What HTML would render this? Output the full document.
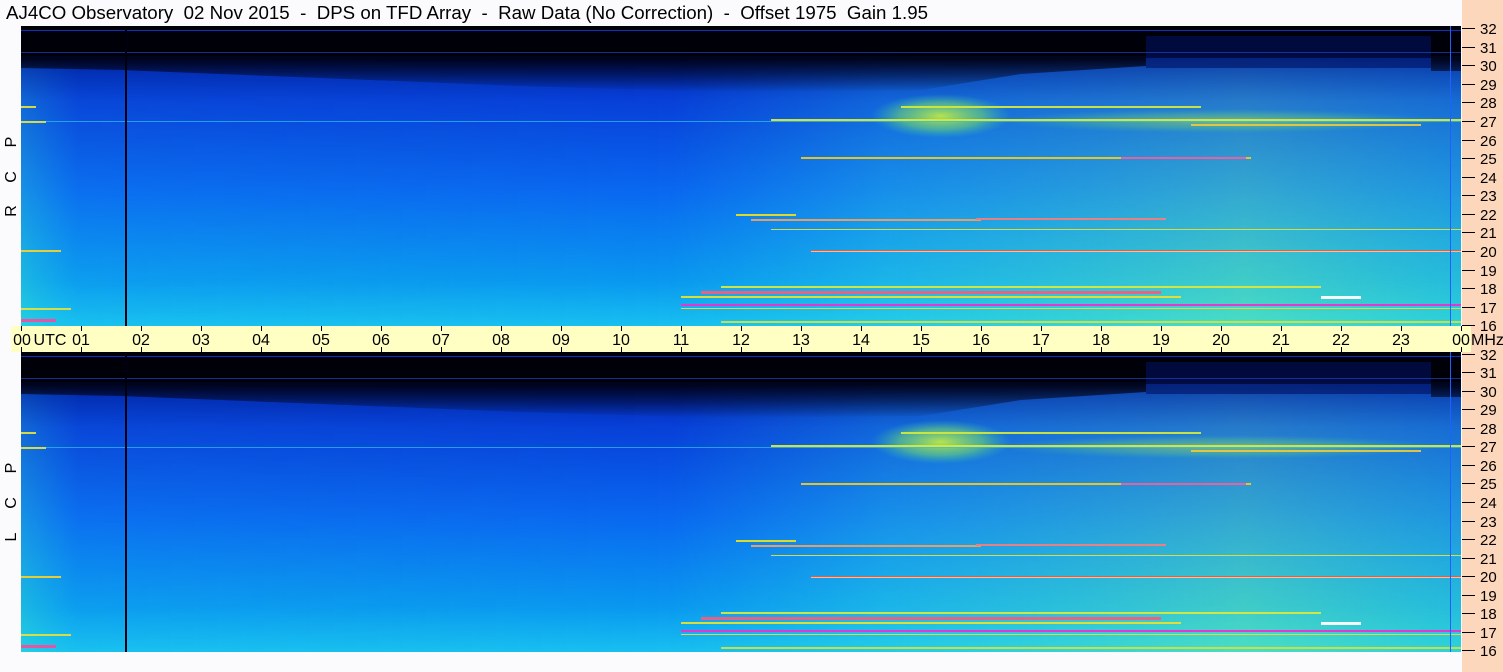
<!DOCTYPE html>
<html><head><meta charset="utf-8"><style>
html,body{margin:0;padding:0;width:1503px;height:672px;overflow:hidden;background:#fbfbfd;font-family:"Liberation Sans",sans-serif}
svg text{font-family:"Liberation Sans",sans-serif;white-space:pre}
</style></head><body>
<svg width="1503" height="672" xmlns="http://www.w3.org/2000/svg">
<defs>
<linearGradient id="vg" x1="0" y1="0" x2="0" y2="1">
<stop offset="0" stop-color="#001050"/><stop offset="0.1" stop-color="#0020a0"/><stop offset="0.25" stop-color="#0840d8"/><stop offset="0.55" stop-color="#0a68f0"/><stop offset="0.85" stop-color="#0a98f0"/><stop offset="1" stop-color="#18c0f0"/>
</linearGradient>
<linearGradient id="hg" x1="0" y1="0" x2="1" y2="0">
<stop offset="0" stop-color="#30e0d0" stop-opacity="0.5"/><stop offset="0.04" stop-color="#20d0e8" stop-opacity="0.1"/><stop offset="0.45" stop-color="#20d0e0" stop-opacity="0"/><stop offset="0.6" stop-color="#30d8e0" stop-opacity="0.5"/><stop offset="0.85" stop-color="#60eab0" stop-opacity="0.7"/><stop offset="1" stop-color="#40e0c8" stop-opacity="0.55"/>
</linearGradient>
<linearGradient id="fade" x1="0" y1="0" x2="0" y2="1">
<stop offset="0" stop-color="#fff" stop-opacity="0"/><stop offset="0.25" stop-color="#fff" stop-opacity="0.5"/><stop offset="1" stop-color="#fff" stop-opacity="1"/>
</linearGradient>
<mask id="m"><rect x="0" y="0" width="1440" height="300" fill="url(#fade)"/></mask>
<linearGradient id="tg" x1="0" y1="0" x2="0" y2="1">
<stop offset="0" stop-color="#000010" stop-opacity="1"/><stop offset="0.5" stop-color="#000010" stop-opacity="0.9"/><stop offset="1" stop-color="#000010" stop-opacity="0"/>
</linearGradient>
<radialGradient id="blob"><stop offset="0" stop-color="#c8f040" stop-opacity="0.9"/><stop offset="0.6" stop-color="#80e860" stop-opacity="0.5"/><stop offset="1" stop-color="#40d0a0" stop-opacity="0"/></radialGradient>
<g id="panel">
<rect x="0" y="0" width="1440" height="300" fill="url(#vg)"/>
<rect x="0" y="0" width="1440" height="300" fill="url(#hg)" mask="url(#m)"/>
<path d="M0 0H1440V45H1410V32H1125V40L1000 48L900 64L700 66L500 60L300 52L100 44L0 42Z" fill="url(#tg)"/>
<rect x="0" y="0" width="1440" height="30" fill="#000008"/>
<rect x="1125" y="10" width="285" height="32" fill="#001060" opacity="0.6"/>
<rect x="0" y="4" width="1440" height="1" fill="#1030c0"/>
<rect x="0" y="26" width="1440" height="1" fill="#2040d0" opacity="0.7"/>
<ellipse cx="920" cy="90" rx="70" ry="22" fill="url(#blob)"/>
<ellipse cx="1200" cy="95" rx="220" ry="12" fill="url(#blob)" opacity="0.5"/>
<rect x="0" y="95" width="1440" height="1" fill="#30c0f0" opacity="0.7"/>
<g opacity="0.95">
<rect x="750" y="93" width="690" height="2" fill="#e0e830"/>
<rect x="880" y="80" width="300" height="2" fill="#d0e840"/>
<rect x="1170" y="98" width="230" height="2" fill="#e8c840"/>
<rect x="780" y="131" width="450" height="2" fill="#f0c820"/>
<rect x="1100" y="131" width="125" height="2" fill="#f060a0"/>
<rect x="730" y="193" width="230" height="2" fill="#f0a060"/>
<rect x="715" y="188" width="60" height="2" fill="#e8e020"/>
<rect x="955" y="192" width="190" height="2" fill="#f08080"/>
<rect x="750" y="203" width="690" height="1" fill="#e0e040"/>
<rect x="790" y="224" width="650" height="2" fill="#f040c0"/>
<rect x="790" y="225" width="650" height="1" fill="#f0e020"/>
<rect x="0" y="224" width="40" height="2" fill="#f0d030"/>
<rect x="680" y="265" width="460" height="3" fill="#f06080"/>
<rect x="660" y="270" width="500" height="2" fill="#e8e030"/>
<rect x="700" y="260" width="600" height="2" fill="#d8e840"/>
<rect x="660" y="278" width="780" height="2" fill="#f030d0"/>
<rect x="660" y="282" width="780" height="1" fill="#e0e040"/>
<rect x="700" y="295" width="740" height="2" fill="#d0e040"/>
<rect x="0" y="282" width="50" height="2" fill="#e0e040"/>
<rect x="0" y="95" width="25" height="2" fill="#e0e040"/>
<rect x="0" y="80" width="15" height="2" fill="#e0e040"/>
<rect x="1300" y="270" width="40" height="3" fill="#ffffff"/>
<rect x="0" y="293" width="35" height="3" fill="#f050a0"/>
</g>
<rect x="104" y="0" width="2" height="300" fill="#000010"/>
<rect x="1429" y="0" width="1" height="300" fill="#2060ff"/>
</g>
</defs>
<text x="6" y="19" font-size="18" fill="#000" textLength="922" lengthAdjust="spacingAndGlyphs">AJ4CO Observatory  02 Nov 2015  -  DPS on TFD Array  -  Raw Data (No Correction)  -  Offset 1975  Gain 1.95</text>
<rect x="1462" y="0" width="41" height="672" fill="#fdd7bb"/>
<use href="#panel" x="21" y="26"/>
<use href="#panel" x="21" y="352"/>
<rect x="11" y="326" width="1460" height="26" fill="#ffffc4"/>
<g font-size="16" fill="#000" text-anchor="middle">
<text x="22" y="345">00</text><text x="50" y="345">UTC</text><text x="81" y="345">01</text>
<text x="141" y="345">02</text><text x="201" y="345">03</text><text x="261" y="345">04</text><text x="321" y="345">05</text><text x="381" y="345">06</text><text x="441" y="345">07</text><text x="501" y="345">08</text><text x="561" y="345">09</text><text x="621" y="345">10</text><text x="681" y="345">11</text><text x="741" y="345">12</text><text x="801" y="345">13</text><text x="861" y="345">14</text><text x="921" y="345">15</text><text x="981" y="345">16</text><text x="1041" y="345">17</text><text x="1101" y="345">18</text><text x="1161" y="345">19</text><text x="1221" y="345">20</text><text x="1281" y="345">21</text><text x="1341" y="345">22</text><text x="1401" y="345">23</text><text x="1461" y="345">00</text>
</g>
<text x="1471" y="345" font-size="16" fill="#000">MHz</text>
<g stroke="#000" stroke-width="1">
<path d="M21.5 326v5M81.5 326v5M141.5 326v5M201.5 326v5M261.5 326v5M321.5 326v5M381.5 326v5M441.5 326v5M501.5 326v5M561.5 326v5M621.5 326v5M681.5 326v5M741.5 326v5M801.5 326v5M861.5 326v5M921.5 326v5M981.5 326v5M1041.5 326v5M1101.5 326v5M1161.5 326v5M1221.5 326v5M1281.5 326v5M1341.5 326v5M1401.5 326v5M1461.5 326v5"/>
<path d="M21.5 347v5M81.5 347v5M141.5 347v5M201.5 347v5M261.5 347v5M321.5 347v5M381.5 347v5M441.5 347v5M501.5 347v5M561.5 347v5M621.5 347v5M681.5 347v5M741.5 347v5M801.5 347v5M861.5 347v5M921.5 347v5M981.5 347v5M1041.5 347v5M1101.5 347v5M1161.5 347v5M1221.5 347v5M1281.5 347v5M1341.5 347v5M1401.5 347v5M1461.5 347v5"/>
<path d="M1462 28.5h13M1462 47.5h13M1462 65.5h13M1462 84.5h13M1462 102.5h13M1462 121.5h13M1462 140.5h13M1462 158.5h13M1462 177.5h13M1462 195.5h13M1462 214.5h13M1462 232.5h13M1462 251.5h13M1462 270.5h13M1462 288.5h13M1462 307.5h13M1462 325.5h13"/>
<path d="M1462 354.5h13M1462 372.5h13M1462 391.5h13M1462 409.5h13M1462 428.5h13M1462 446.5h13M1462 465.5h13M1462 483.5h13M1462 502.5h13M1462 521.5h13M1462 539.5h13M1462 558.5h13M1462 576.5h13M1462 595.5h13M1462 613.5h13M1462 632.5h13M1462 650.5h13"/>
</g>
<g font-size="15" fill="#000">
<text x="1480" y="34">32</text><text x="1480" y="53">31</text><text x="1480" y="71">30</text><text x="1480" y="90">29</text><text x="1480" y="108">28</text><text x="1480" y="127">27</text><text x="1480" y="146">26</text><text x="1480" y="164">25</text><text x="1480" y="183">24</text><text x="1480" y="201">23</text><text x="1480" y="220">22</text><text x="1480" y="238">21</text><text x="1480" y="257">20</text><text x="1480" y="276">19</text><text x="1480" y="294">18</text><text x="1480" y="313">17</text><text x="1480" y="331">16</text>
<text x="1480" y="360">32</text><text x="1480" y="378">31</text><text x="1480" y="397">30</text><text x="1480" y="415">29</text><text x="1480" y="434">28</text><text x="1480" y="452">27</text><text x="1480" y="471">26</text><text x="1480" y="489">25</text><text x="1480" y="508">24</text><text x="1480" y="527">23</text><text x="1480" y="545">22</text><text x="1480" y="564">21</text><text x="1480" y="582">20</text><text x="1480" y="601">19</text><text x="1480" y="619">18</text><text x="1480" y="638">17</text><text x="1480" y="656">16</text>
</g>
<g font-size="16" fill="#000" text-anchor="middle">
<text transform="translate(16,142) rotate(-90)">P</text>
<text transform="translate(16,177) rotate(-90)">C</text>
<text transform="translate(16,211) rotate(-90)">R</text>
<text transform="translate(16,468) rotate(-90)">P</text>
<text transform="translate(16,503) rotate(-90)">C</text>
<text transform="translate(16,537) rotate(-90)">L</text>
</g>
</svg>
</body></html>
